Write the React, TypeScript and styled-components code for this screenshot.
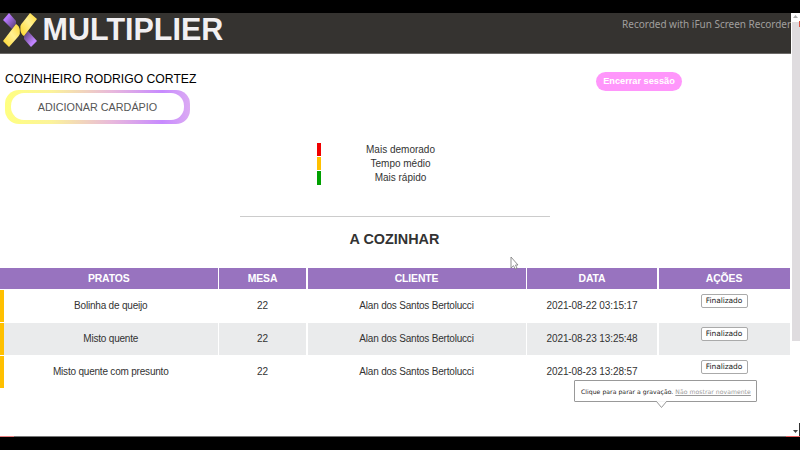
import React from "react";
import styled, { createGlobalStyle } from "styled-components";

const GlobalStyle = createGlobalStyle`
  * { box-sizing: border-box; }
  body {
    margin: 0;
    background: #000;
    color: #333;
    font-family: "Liberation Sans", Arial, sans-serif;
    overflow: hidden;
  }
`;

const Screen = styled.div`
  position: relative;
  width: 800px;
  height: 450px;
  padding: 13px 0;
  background: #000;
  overflow: hidden;
`;

const Browser = styled.div`
  display: flex;
  height: 424px;
  background: #fff;
  border-bottom: 1px solid #777;
`;

const Page = styled.div`
  width: 791px;
  flex: none;
`;

const Header = styled.header`
  display: flex;
  align-items: flex-start;
  height: 41px;
  background: #353330;
  border-bottom: 1px solid #6b6967;
`;

const Logo = styled.svg`
  flex: none;
  width: 36px;
  height: 36px;
  margin-left: 2px;
`;

const Brand = styled.h1`
  margin: 0 0 0 4.6px;
  font-size: 30.5px;
  line-height: 33px;
  color: #f2f0f2;
`;

const Watermark = styled.span`
  margin: 4px 0 0 auto;
  font: 10px/14px "Noto Sans", sans-serif;
  letter-spacing: -0.02px;
  color: #a09f9d;
  white-space: nowrap;
`;

const Toolbar = styled.section`
  display: flex;
  justify-content: space-between;
  align-items: flex-start;
  height: 89px;
  padding: 16px 109px 0 5px;
`;

const CookName = styled.h2`
  margin: 0;
  font-size: 12.2px;
  font-weight: 400;
  line-height: 18px;
  color: #000;
  white-space: nowrap;
`;

const MenuButton = styled.button`
  display: block;
  width: 185px;
  height: 34px;
  margin: 2px 0 0;
  padding: 3px 6px 4px;
  border: 0;
  border-radius: 14px;
  background: linear-gradient(90deg, #ffff80 0%, #fbf39a 25%, #e8b8dc 58%, #c78aff 85%, #dbaaf3 100%);
  font: 10.8px "Liberation Sans", sans-serif;
  color: #555;
`;

const MenuLabel = styled.span`
  display: flex;
  align-items: center;
  justify-content: center;
  height: 27px;
  border-radius: 13px;
  background: #fff;
`;

const LogoutButton = styled.button`
  width: 86px;
  height: 19px;
  margin: 2px 0 0;
  padding: 0;
  border: 0;
  border-radius: 10px;
  background: #ff96fb;
  font: bold 9.2px/19px "Liberation Sans", sans-serif;
  letter-spacing: 0;
  color: #fff;
  white-space: nowrap;
`;

const Legend = styled.ul`
  display: grid;
  gap: 1px;
  width: 166px;
  margin: 0 0 0 317px;
  padding: 0;
  list-style: none;
`;

const LegendItem = styled.li<{ $color: string }>`
  height: 13.2px;
  padding-right: 3px;
  border-left: 4px solid ${(p) => p.$color};
  font-size: 10px;
  line-height: 14px;
  text-align: center;
`;

const Divider = styled.hr`
  width: 310px;
  height: 1px;
  margin: 31px 0 0 240px;
  border: 0;
  background: #ccc;
`;

const Title = styled.h3`
  margin: 13px 0 20px;
  padding-right: 2px;
  font-size: 14.4px;
  line-height: 18px;
  text-align: center;
`;

const Row = styled.div`
  display: grid;
  grid-template-columns: 217.5px 87px 218px 130px 131px;
  column-gap: 1.5px;
  height: 32px;
  margin-bottom: 1.2px;
  font-size: 10px;
  letter-spacing: -0.2px;
`;

const HeadRow = styled(Row)`
  height: 21px;
  margin-bottom: 1px;
  font-size: 10.4px;
  font-weight: 700;
  letter-spacing: -0.1px;
  color: #fff;
`;

const HeadCell = styled.div`
  display: flex;
  align-items: center;
  justify-content: center;
  background: #9873bf;
`;

const Cell = styled.div<{ $shade: boolean; $marker?: boolean }>`
  display: flex;
  align-items: center;
  justify-content: center;
  background: ${(p) => (p.$shade ? "#eaebec" : "#fff")};
  border-left: ${(p) => (p.$marker ? "4px solid #ffc000" : "0")};
  white-space: nowrap;
`;

const DataCell = styled(Cell)`
  letter-spacing: -0.1px;
`;

const ActionCell = styled(Cell)`
  align-items: flex-start;
  padding-top: 4.5px;
`;

const DoneButton = styled.button`
  width: 47px;
  height: 14px;
  padding: 0;
  border: 1px solid #aaa;
  border-radius: 2px;
  background: #fff;
  font: 7.5px/12px "DejaVu Sans", sans-serif;
  letter-spacing: -0.08px;
  color: #222;
`;

const Scrollbar = styled.div`
  display: flex;
  flex-direction: column;
  align-items: center;
  width: 9px;
  background: #fff;
`;

const Arrow = styled.svg`
  width: 5px;
  height: 3px;
  margin-top: 2px;
`;

const Thumb = styled.div`
  width: 8px;
  height: 319px;
  margin: 4px 0 auto 1px;
  background: #dfdcdf;
`;

const DownArrow = styled(Arrow)`
  margin-bottom: 3px;
`;

const EdgeMark = styled.i<{ $x: number; $y: number; $w: number; $h: number; $c: string }>`
  position: absolute;
  left: ${(p) => p.$x}px;
  top: ${(p) => p.$y}px;
  width: ${(p) => p.$w}px;
  height: ${(p) => p.$h}px;
  background: ${(p) => p.$c};
`;

const Tooltip = styled.div`
  position: absolute;
  left: 574px;
  top: 380px;
  width: 183px;
  height: 22px;
  padding-left: 6px;
  border: 1px solid #999;
  border-radius: 1px;
  background: #fff;
  font: 6.1px/21px "DejaVu Sans", sans-serif;
  letter-spacing: 0.05px;
  color: #222;
  white-space: nowrap;
`;

const TooltipLink = styled.a`
  color: #999;
  text-decoration: underline;
`;

const TooltipTail = styled.svg`
  position: absolute;
  left: 81px;
  top: 20px;
  width: 11px;
  height: 8px;
`;

const Cursor = styled.svg`
  position: absolute;
  left: 510px;
  top: 256px;
  width: 9px;
  height: 14px;
`;

const dishes = [
  { name: "Bolinha de queijo", table: 22, client: "Alan dos Santos Bertolucci", date: "2021-08-22 03:15:17" },
  { name: "Misto quente", table: 22, client: "Alan dos Santos Bertolucci", date: "2021-08-23 13:25:48" },
  { name: "Misto quente com presunto", table: 22, client: "Alan dos Santos Bertolucci", date: "2021-08-23 13:28:57" },
];

const BrandMark = () => (
  <Logo viewBox="0 0 36 36">
    <defs>
      <linearGradient id="gold" x1="0" y1="1" x2="1" y2="0">
        <stop offset="0" stopColor="#ffd528" />
        <stop offset="0.55" stopColor="#fff092" />
        <stop offset="1" stopColor="#ffd830" />
      </linearGradient>
      <linearGradient id="violet" x1="0" y1="0" x2="1" y2="1">
        <stop offset="0.3" stopColor="#b878ff" />
        <stop offset="1" stopColor="#4d3a66" />
      </linearGradient>
      <linearGradient id="violetLow" x1="1" y1="1" x2="0" y2="0">
        <stop offset="0.3" stopColor="#c184ff" />
        <stop offset="1" stopColor="#4d3a66" />
      </linearGradient>
    </defs>
    <path d="M1 7L7 0L14 8L14 11L10 16Z" fill="url(#violet)" />
    <path d="M26 18L35 28L29 34L22 26L22 23Z" fill="url(#violetLow)" />
    <path d="M1 28L14 11Q17.5 13 17.8 17L17.8 21Q17 23 15 25L7 34Z" fill="url(#gold)" />
    <path d="M28 0L35 6L22 23Q18.8 21 18.4 17L18.4 13Q19 11 21 9Z" fill="url(#gold)" />
  </Logo>
);

export default function App() {
  return (
    <Screen>
      <GlobalStyle />
      <Browser>
        <Page>
          <Header>
            <BrandMark />
            <Brand>MULTIPLIER</Brand>
            <Watermark>Recorded with iFun Screen Recorder</Watermark>
          </Header>
          <Toolbar>
            <div>
              <CookName>COZINHEIRO RODRIGO CORTEZ</CookName>
              <MenuButton>
                <MenuLabel>ADICIONAR CARDÁPIO</MenuLabel>
              </MenuButton>
            </div>
            <LogoutButton>Encerrar sessão</LogoutButton>
          </Toolbar>
          <Legend>
            <LegendItem $color="#f00000">Mais demorado</LegendItem>
            <LegendItem $color="#ffc000">Tempo médio</LegendItem>
            <LegendItem $color="#00a000">Mais rápido</LegendItem>
          </Legend>
          <Divider />
          <Title>A COZINHAR</Title>
          <HeadRow>
            {["PRATOS", "MESA", "CLIENTE", "DATA", "AÇÕES"].map((h) => (
              <HeadCell key={h}>{h}</HeadCell>
            ))}
          </HeadRow>
          {dishes.map((d, i) => (
            <Row key={d.date}>
              <Cell $shade={i % 2 === 1} $marker>{d.name}</Cell>
              <DataCell $shade={i % 2 === 1}>{d.table}</DataCell>
              <Cell $shade={i % 2 === 1}>{d.client}</Cell>
              <DataCell $shade={i % 2 === 1}>{d.date}</DataCell>
              <ActionCell $shade={i % 2 === 1}>
                <DoneButton>Finalizado</DoneButton>
              </ActionCell>
            </Row>
          ))}
        </Page>
        <Scrollbar>
          <Arrow viewBox="0 0 5 3"><path d="M0 3L2.5 0L5 3Z" fill="#aaa" /></Arrow>
          <Thumb />
          <DownArrow viewBox="0 0 5 3"><path d="M0 0L2.5 3L5 0Z" fill="#444" /></DownArrow>
        </Scrollbar>
      </Browser>
      <Tooltip>
        Clique para parar a gravação. <TooltipLink>Não mostrar novamente</TooltipLink>
        <TooltipTail viewBox="0 0 11 8">
          <path d="M0.5 0.5L5.5 6.5L10.5 0.5" fill="#fff" stroke="#999" />
          <path d="M1 0H10" stroke="#fff" strokeWidth="1.6" />
        </TooltipTail>
      </Tooltip>
      <Cursor viewBox="0 0 9 14">
        <path d="M1 1V12L3.5 9.7L5.2 13L7 12.2L5.5 9H8Z" fill="#fff" stroke="#777" strokeWidth="0.8" />
      </Cursor>
      <EdgeMark $x={0} $y={436} $w={14} $h={1} $c="#e88080" />
      <EdgeMark $x={786} $y={436} $w={14} $h={1} $c="#e86060" />
      <EdgeMark $x={799} $y={21} $w={1} $h={6} $c="#d85040" />
      <EdgeMark $x={799} $y={423} $w={1} $h={13} $c="#333" />
    </Screen>
  );
}
